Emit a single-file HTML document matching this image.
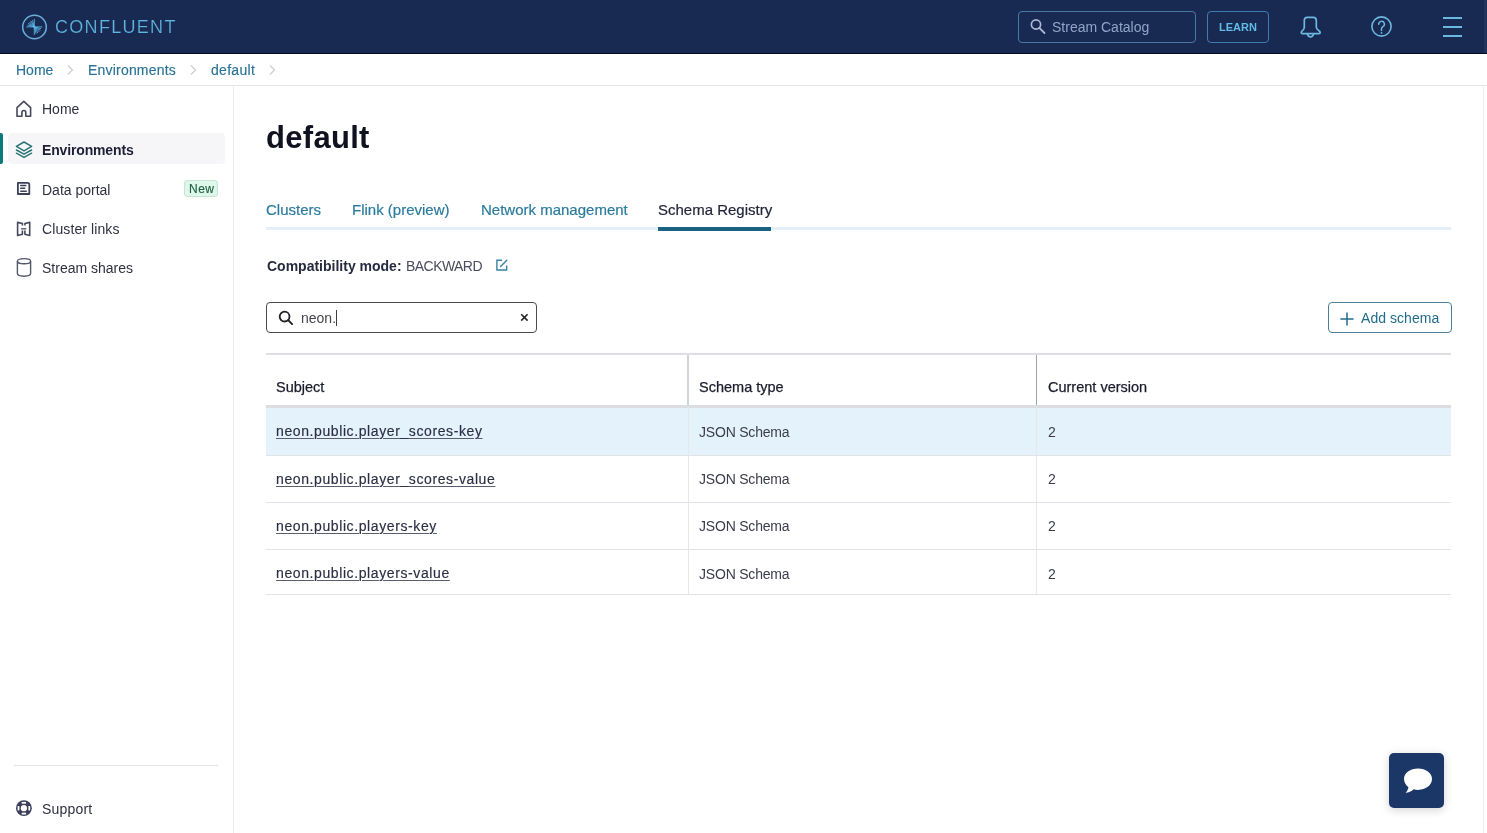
<!DOCTYPE html>
<html>
<head>
<meta charset="utf-8">
<style>
*{box-sizing:border-box;margin:0;padding:0}
html,body{width:1487px;height:833px;overflow:hidden;background:#fff;font-family:"Liberation Sans",sans-serif;-webkit-font-smoothing:antialiased}
.t{will-change:transform}
.abs{position:absolute}
.t{position:absolute;white-space:nowrap;line-height:1}
#hdr{position:absolute;left:0;top:0;width:1487px;height:54px;background:#192a52;border-bottom:1px solid #050a20}
#crumb{position:absolute;left:0;top:54px;width:1487px;height:32px;background:#fff;border-bottom:1px solid #e6e6ea}
#side{position:absolute;left:0;top:86px;width:234px;height:747px;border-right:1px solid #ececef;background:#fff}
#main{position:absolute;left:234px;top:86px;width:1250px;height:747px;border-right:1px solid #ededf0;background:#fff}
.lnk{font-size:14px;letter-spacing:0.6px;-webkit-text-stroke:0.15px #2a2d44;color:#2a2d44;text-decoration:underline;text-underline-offset:1.5px;text-decoration-thickness:0.8px;text-decoration-color:#5a5c70}
.typ{font-size:14px;letter-spacing:-0.2px;color:#3b3d4c}
</style>
</head>
<body>
<div id="hdr">
  <!-- logo -->
  <svg class="abs" style="left:20px;top:13px" width="29" height="29" viewBox="0 0 29 29">
    <circle cx="14.5" cy="14" r="11.8" fill="none" stroke="#6aaedb" stroke-width="1.5"/>
    <g stroke="#5cbbe8" stroke-width="0.85" stroke-linecap="round"><line x1="14.3" y1="13.9" x2="6.70" y2="13.90"/><line x1="14.3" y1="13.9" x2="7.92" y2="12.19"/><line x1="14.3" y1="13.9" x2="8.58" y2="10.60"/><line x1="14.3" y1="13.9" x2="9.63" y2="9.23"/><line x1="14.3" y1="13.9" x2="11.00" y2="8.18"/><line x1="14.3" y1="13.9" x2="12.59" y2="7.52"/><line x1="14.3" y1="13.9" x2="14.30" y2="6.30"/><line x1="14.3" y1="13.9" x2="21.90" y2="13.90"/><line x1="14.3" y1="13.9" x2="20.68" y2="15.61"/><line x1="14.3" y1="13.9" x2="20.02" y2="17.20"/><line x1="14.3" y1="13.9" x2="18.97" y2="18.57"/><line x1="14.3" y1="13.9" x2="17.60" y2="19.62"/><line x1="14.3" y1="13.9" x2="16.01" y2="20.28"/><line x1="14.3" y1="13.9" x2="14.30" y2="21.50"/></g>
  </svg>
  <div class="t" style="left:55px;top:18px;font-size:18px;letter-spacing:1.3px;color:#5fb6e0;-webkit-text-stroke:0.2px #192a52">CONFLUENT</div>

  <div class="abs" style="left:1018px;top:11px;width:178px;height:32px;border:1.5px solid #4a78a6;border-radius:4px"></div>
  <svg class="abs" style="left:1029px;top:18px" width="17" height="17" viewBox="0 0 17 17">
    <circle cx="7" cy="6.5" r="4.6" fill="none" stroke="#a9b9d6" stroke-width="1.7"/>
    <line x1="10.3" y1="9.8" x2="15.5" y2="15" stroke="#a9b9d6" stroke-width="1.8" stroke-linecap="round"/>
  </svg>
  <div class="t" style="left:1052px;top:20px;font-size:14px;color:#8fa5c7">Stream Catalog</div>

  <div class="abs" style="left:1207px;top:11px;width:62px;height:32px;border:1.5px solid #3f7db0;border-radius:4px"></div>
  <div class="t" style="left:1219px;top:22px;font-size:11px;font-weight:bold;color:#63bae6">LEARN</div>

  <!-- bell -->
  <svg class="abs" style="left:1295px;top:10px" width="32" height="32" viewBox="0 0 32 32">
    <path d="M9.3 17 V10.4 Q9.3 7.4 12.3 7.4 H18.3 Q21.3 7.4 21.3 10.4 V17 Q21.3 19 23.6 20.4 Q25.2 21.4 25.2 22.6 Q25.2 23.6 24 23.6 H7.4 Q6.2 23.6 6.2 22.6 Q6.2 21.4 7.8 20.4 Q9.3 19 9.3 17 Z" fill="none" stroke="#6bb8e0" stroke-width="1.7" stroke-linejoin="round"/>
    <path d="M12.4 23.8 A3.2 4 0 0 0 18.6 23.8" fill="none" stroke="#6bb8e0" stroke-width="1.7"/>
  </svg>
  <!-- help -->
  <svg class="abs" style="left:1365px;top:10px" width="32" height="32" viewBox="0 0 32 32">
    <circle cx="16.5" cy="16.5" r="9.6" fill="none" stroke="#6db6de" stroke-width="1.6"/>
    <path d="M13.7 14.2 a2.85 2.85 0 1 1 4.2 2.5 c-0.9 0.5 -1.4 1.1 -1.4 2.1 v1.8" fill="none" stroke="#6db6de" stroke-width="1.5" stroke-linecap="round"/>
    <circle cx="16.5" cy="22.9" r="0.95" fill="#6db6de"/>
  </svg>
  <!-- hamburger -->
  <div class="abs" style="left:1443px;top:16.5px;width:19px;height:2px;background:#6ab8e0"></div>
  <div class="abs" style="left:1443px;top:26px;width:19px;height:2px;background:#6ab8e0"></div>
  <div class="abs" style="left:1443px;top:34.5px;width:19px;height:2px;background:#6ab8e0"></div>
  <div class="abs" style="left:1484px;top:0;width:3px;height:53px;background:#22345c"></div>
</div>

<div id="crumb">
  <div class="t" style="left:16px;top:8.5px;font-size:14px;color:#2a7394;-webkit-text-stroke:0.15px #2a7394">Home</div>
  <svg class="abs" style="left:65px;top:10px" width="10" height="12" viewBox="0 0 10 12"><path d="M3 1.5 L7.5 6 L3 10.5" fill="none" stroke="#cfcfd3" stroke-width="1.3"/></svg>
  <div class="t" style="left:88px;top:8.5px;font-size:14px;letter-spacing:0.2px;color:#2a7394;-webkit-text-stroke:0.15px #2a7394">Environments</div>
  <svg class="abs" style="left:188px;top:10px" width="10" height="12" viewBox="0 0 10 12"><path d="M3 1.5 L7.5 6 L3 10.5" fill="none" stroke="#cfcfd3" stroke-width="1.3"/></svg>
  <div class="t" style="left:211px;top:8.5px;font-size:14px;letter-spacing:0.3px;color:#2a7394;-webkit-text-stroke:0.15px #2a7394">default</div>
  <svg class="abs" style="left:267px;top:10px" width="10" height="12" viewBox="0 0 10 12"><path d="M3 1.5 L7.5 6 L3 10.5" fill="none" stroke="#cfcfd3" stroke-width="1.3"/></svg>
</div>

<div id="side">
  <!-- Home -->
  <svg class="abs" style="left:15px;top:14px" width="18" height="18" viewBox="0 0 18 18">
    <path d="M2 16.2 V7.6 L8.8 1.4 L15.6 7.6 V16.2 H10.8 V12.4 a1.95 1.95 0 0 0 -3.9 0 V16.2 Z" fill="none" stroke="#45475e" stroke-width="1.6" stroke-linejoin="round"/>
  </svg>
  <div class="t" style="left:41.6px;top:16.4px;font-size:14px;color:#2f3142">Home</div>
  <!-- Environments active -->
  <div class="abs" style="left:8px;top:47px;width:217px;height:31px;background:#f6f6f9;border-radius:4px"></div>
  <div class="abs" style="left:0;top:47px;width:3px;height:31px;background:#0c7a7d;border-radius:0 2px 2px 0"></div>
  <svg class="abs" style="left:14px;top:54px" width="20" height="20" viewBox="0 0 20 20">
    <path d="M10 2 L17.6 6.4 L10 10.8 L2.4 6.4 Z" fill="none" stroke="#2c7576" stroke-width="1.5" stroke-linejoin="round"/>
    <path d="M2.4 10 L10 14.2 L17.6 10" fill="none" stroke="#2c7576" stroke-width="1.5" stroke-linejoin="round" stroke-linecap="round"/>
    <path d="M2.4 13.2 L10 17.4 L17.6 13.2" fill="none" stroke="#2c7576" stroke-width="1.5" stroke-linejoin="round" stroke-linecap="round"/>
  </svg>
  <div class="t" style="left:42px;top:57px;font-size:14px;font-weight:bold;letter-spacing:-0.15px;color:#1d1f36">Environments</div>
  <!-- Data portal -->
  <svg class="abs" style="left:12px;top:92px" width="24" height="22" viewBox="0 0 24 22">
    <path d="M5.9 4.9 H15.6 Q17.3 4.9 17.3 6.6 V16 H5.9 Z" fill="none" stroke="#3e4058" stroke-width="1.8" stroke-linejoin="round"/>
    <path d="M8.2 7.4 H14.4 M8.2 10.3 H13.2 M8.2 13.2 H14.8" stroke="#3e4058" stroke-width="1.5"/>
  </svg>
  <div class="t" style="left:42px;top:96.5px;font-size:14px;color:#2f3142">Data portal</div>
  <div class="abs" style="left:184px;top:93.5px;width:34px;height:17px;background:#ddf8ea;border:1px solid #c6e5d5;border-radius:3px"></div>
  <div class="t" style="left:188.5px;top:97px;font-size:12px;letter-spacing:0.5px;color:#21603f;-webkit-text-stroke:0.15px #21603f">New</div>
  <!-- Cluster links -->
  <svg class="abs" style="left:12px;top:131.8px" width="24" height="22" viewBox="0 0 24 22">
    <path d="M10.4 7.4 V5.5 L5.6 4.4 V17.6 L10.4 16.3 V12.6 M12.9 7.4 V5.5 L17.7 4.4 V17.6 L12.9 16.3 V12.6" fill="none" stroke="#45475e" stroke-width="1.6" stroke-linejoin="round"/>
    <path d="M9 10.8 H14.3" stroke="#6a6c7e" stroke-width="1.6"/>
  </svg>
  <div class="t" style="left:42px;top:136px;font-size:14px;letter-spacing:0.1px;color:#2f3142">Cluster links</div>
  <!-- Stream shares -->
  <svg class="abs" style="left:15px;top:171px" width="18" height="20" viewBox="0 0 18 20">
    <ellipse cx="9" cy="4.2" rx="6.6" ry="2.6" fill="none" stroke="#55576b" stroke-width="1.4"/>
    <path d="M2.4 4.2 V16.6 c0 1.5 3 2.6 6.6 2.6 s6.6 -1.1 6.6 -2.6 V4.2" fill="none" stroke="#55576b" stroke-width="1.4"/>
  </svg>
  <div class="t" style="left:42px;top:175px;font-size:14px;color:#2f3142">Stream shares</div>
  <!-- divider -->
  <div class="abs" style="left:14px;top:679px;width:204px;height:1px;background:#e4e4e8"></div>
  <!-- Support -->
  <svg class="abs" style="left:14px;top:712px" width="20" height="20" viewBox="0 0 20 20">
    <circle cx="9.9" cy="10.2" r="7.9" fill="#3b3d5a"/>
    <circle cx="9.9" cy="10.2" r="3.1" fill="#fff"/>
    <rect x="7.7" y="3.9" width="4.4" height="1.8" fill="#fff"/>
    <rect x="7.7" y="14.7" width="4.4" height="1.8" fill="#fff"/>
    <rect x="3.6" y="8" width="1.8" height="4.4" fill="#fff"/>
    <rect x="14.4" y="8" width="1.8" height="4.4" fill="#fff"/>
  </svg>
  <div class="t" style="left:42px;top:716px;font-size:14px;letter-spacing:0.2px;color:#2f3142">Support</div>
</div>

<div id="main"></div>
<div class="t" style="left:266px;top:121.5px;font-size:31px;font-weight:bold;letter-spacing:0.3px;color:#10121f">default</div>
<!-- tabs -->
<div class="abs" style="left:266px;top:227px;width:1185px;height:3px;background:#e4eff7"></div>
<div class="t" style="left:266px;top:201.5px;font-size:15px;color:#2b7b9e;-webkit-text-stroke:0.2px #2b7b9e">Clusters</div>
<div class="t" style="left:352px;top:201.5px;font-size:15px;color:#2b7b9e;-webkit-text-stroke:0.2px #2b7b9e">Flink (preview)</div>
<div class="t" style="left:481px;top:201.5px;font-size:15px;color:#2b7b9e;-webkit-text-stroke:0.2px #2b7b9e">Network management</div>
<div class="t" style="left:658px;top:201.5px;font-size:15px;color:#23263b;-webkit-text-stroke:0.2px #23263b">Schema Registry</div>
<div class="abs" style="left:658px;top:227px;width:113px;height:3.5px;background:#1b6282"></div>
<!-- compat -->
<div class="t" style="left:267px;top:259px;font-size:14px;font-weight:bold;color:#272a3e">Compatibility mode:</div>
<div class="t" style="left:406px;top:259px;font-size:14px;letter-spacing:-0.55px;color:#4a4c5e">BACKWARD</div>
<svg class="abs" style="left:494px;top:257px" width="16" height="16" viewBox="0 0 16 16">
  <path d="M8 3.2 H2.9 V13 H12.7 V8.6" fill="none" stroke="#3a83a4" stroke-width="1.4"/>
  <path d="M6.6 9.4 L12.8 3.2" fill="none" stroke="#3a83a4" stroke-width="1.4" stroke-linecap="round"/>
</svg>
<!-- search -->
<div class="abs" style="left:266px;top:302px;width:271px;height:31px;border:1.4px solid #4c4c50;border-radius:4px"></div>
<svg class="abs" style="left:277px;top:309px" width="18" height="18" viewBox="0 0 18 18">
  <circle cx="7.6" cy="7.6" r="4.9" fill="none" stroke="#1f1f24" stroke-width="1.8"/>
  <line x1="11.2" y1="11.2" x2="15.1" y2="15.1" stroke="#1f1f24" stroke-width="1.9" stroke-linecap="round"/>
</svg>
<div class="t" style="left:301px;top:311px;font-size:14px;color:#45454d">neon.</div>
<div class="abs" style="left:336px;top:310px;width:1px;height:16px;background:#3c3c44"></div>
<svg class="abs" style="left:519px;top:312px" width="11" height="11" viewBox="0 0 11 11">
  <path d="M2.2 2.2 L8.6 8.6 M8.6 2.2 L2.2 8.6" stroke="#26262c" stroke-width="1.6"/>
</svg>
<!-- add schema -->
<div class="abs" style="left:1328px;top:302px;width:124px;height:31px;border:1.4px solid #4a8199;border-radius:4px"></div>
<svg class="abs" style="left:1339px;top:311px" width="16" height="16" viewBox="0 0 16 16">
  <path d="M8 1.4 V14.6 M1.4 8 H14.6" stroke="#1f6b8b" stroke-width="1.5"/>
</svg>
<div class="t" style="left:1361px;top:311px;font-size:14px;letter-spacing:0.05px;color:#1f6b8b">Add schema</div>
<!-- table -->
<div class="abs" style="left:266px;top:353px;width:1185px;height:2px;background:#dedfe4"></div>
<div class="abs" style="left:687px;top:355px;width:2px;height:50px;background:#d3d4d9"></div>
<div class="abs" style="left:1036px;top:355px;width:1.2px;height:50px;background:#a3a4ab"></div>
<div class="t" style="left:276px;top:380px;font-size:14.5px;color:#1b1d2c;-webkit-text-stroke:0.25px #1b1d2c">Subject</div>
<div class="t" style="left:699px;top:380px;font-size:14.5px;color:#1b1d2c;-webkit-text-stroke:0.25px #1b1d2c">Schema type</div>
<div class="t" style="left:1048px;top:380px;font-size:14.5px;color:#1b1d2c;-webkit-text-stroke:0.25px #1b1d2c">Current version</div>
<div class="abs" style="left:266px;top:404.5px;width:1185px;height:3px;background:#dcdde3"></div>
<div class="abs" style="left:266px;top:407.5px;width:1185px;height:47.5px;background:#e4f3fb"></div>
<div class="abs" style="left:266px;top:455px;width:1185px;height:1px;background:#e2e3e8"></div>
<div class="abs" style="left:266px;top:501.5px;width:1185px;height:1px;background:#e2e3e8"></div>
<div class="abs" style="left:266px;top:549px;width:1185px;height:1px;background:#e2e3e8"></div>
<div class="abs" style="left:266px;top:594.2px;width:1185px;height:1px;background:#e2e3e8"></div>
<div class="abs" style="left:688px;top:407px;width:1px;height:188px;background:#e6e7eb"></div>
<div class="abs" style="left:1036px;top:407px;width:1px;height:188px;background:#e6e7eb"></div>

<div class="t lnk" style="left:276px;top:424px">neon.public.player_scores-key</div>
<div class="t lnk" style="left:276px;top:471.5px">neon.public.player_scores-value</div>
<div class="t lnk" style="left:276px;top:518.5px">neon.public.players-key</div>
<div class="t lnk" style="left:276px;top:566px">neon.public.players-value</div>
<div class="t typ" style="left:699px;top:424.5px">JSON Schema</div>
<div class="t typ" style="left:699px;top:472.0px">JSON Schema</div>
<div class="t typ" style="left:699px;top:519.0px">JSON Schema</div>
<div class="t typ" style="left:699px;top:566.5px">JSON Schema</div>
<div class="t typ" style="left:1048px;top:424.5px">2</div>
<div class="t typ" style="left:1048px;top:472.0px">2</div>
<div class="t typ" style="left:1048px;top:519.0px">2</div>
<div class="t typ" style="left:1048px;top:566.5px">2</div>

<!-- chat -->
<div class="abs" style="left:1389px;top:753px;width:55px;height:55px;background:#1b3768;border-radius:5px;box-shadow:0 2px 10px rgba(0,0,0,0.18)"></div>
<svg class="abs" style="left:1400.7px;top:764px" width="34" height="34" viewBox="0 0 34 34">
  <path d="M17 4.5 c7.6 0 14 4.4 14 10.6 c0 6.2 -6.4 10.8 -14 10.8 c-1.6 0 -3 -0.2 -4.4 -0.6 c-2 2 -5 3.4 -8 3.4 c1.6 -1.6 2.6 -3.4 2.8 -5.4 c-2.6 -2 -4.4 -5 -4.4 -8.2 c0 -6.2 6.4 -10.6 14 -10.6 Z" fill="#fff"/>
</svg>

</body>
</html>
